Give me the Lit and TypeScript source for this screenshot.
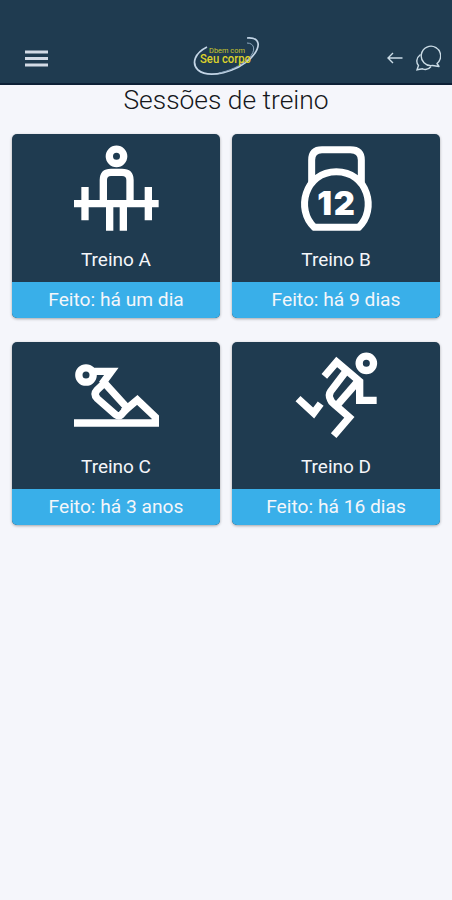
import { LitElement, html, svg, css } from "lit";
import { customElement, property } from "lit/decorators.js";

const icons: Record<string, unknown> = {
  barbell: svg`
    <circle cx="151.5" cy="55" r="21.5" stroke-width="22"/>
    <path d="M112 192V126Q112 103 135 103H168Q192 103 192 126V192"/>
    <path d="M24 197H278M57 147V247M247 147V247M131 205V278M172 205V278"/>`,
  kettlebell: svg`
    <path d="M77 134V66Q77 35 108 35H193Q226 35 226 66V134" stroke-width="21"/>
    <path d="M85 268C28 216 56 101 151 101S274 216 218 268Z" stroke-width="21"/>
    <text x="94" y="230" class="num">1</text>
    <text x="143" y="230" class="num">2</text>`,
  situp: svg`
    <circle cx="60" cy="87" r="21.5" stroke-width="22"/>
    <path d="M78 76H136L108 114"/>
    <path d="M113 108L184 186L166 206Q158 213 149 206L94 158Q81 145 93 132L117 109"/>
    <path d="M172 197L214 162L268 213V231H24"/>`,
  runner: svg`
    <circle cx="241" cy="52" r="21.5" stroke-width="22"/>
    <path d="M115 91L152 48L221 106V163H272"/>
    <path d="M180 76L134 136Q126 147 134 162Q136 168 143 173L190 214L143 269"/>
    <path d="M214 108L155 176"/>
    <path d="M36 158L83 201L104 173"/>`,
};

@customElement("workout-card")
class WorkoutCard extends LitElement {
  @property() name = "";
  @property() done = "";
  @property() icon = "";
  static styles = css`
    :host {
      display: flex;
      flex-direction: column;
      height: 183.6px;
      border-radius: 5px;
      overflow: hidden;
      background: #1f3b50;
      color: #f4f6fa;
      text-align: center;
      box-shadow: 0 1px 3px #0005;
    }
    .top { flex: 1; padding-top: 4px; display: flex; flex-direction: column; align-items: center; }
    .icon { width: 104px; height: 100px; fill: none; stroke: #fff; stroke-width: 22; }
    .num { font: 900 98px Inter, sans-serif; fill: #fff; stroke: none; }
    .name { font-size: 19px; line-height: 24px; margin-top: 9.4px; }
    .done { height: 36px; line-height: 36px; font-size: 19.2px; background: #39afe9; }
  `;
  render() {
    return html`
      <div class="top">
        <svg class="icon" viewBox="-6 0 312 300">${icons[this.icon]}</svg>
        <div class="name">${this.name}</div>
      </div>
      <div class="done">Feito: ${this.done}</div>`;
  }
}

@customElement("app-root")
class AppRoot extends LitElement {
  static styles = css`
    :host {
      display: block;
      height: 900px;
      background: #f5f6fb;
      font-family: Roboto, sans-serif;
    }
    header {
      box-sizing: border-box;
      height: 85px;
      padding: 33px 11px 0 25px;
      display: grid;
      grid-template-columns: 1fr 70px 1fr;
      align-items: center;
      background: #1f3b50;
      border-bottom: 2px solid #0d2036;
    }
    .menu { width: 23px; height: 17px; }
    .logo { width: 90px; height: 50px; justify-self: center; margin-left: -14px; }
    .small { font: 8px Roboto, sans-serif; fill: #c9c62e; }
    .big { font: 500 12px Roboto, sans-serif; fill: #ddd32b; }
    .actions { justify-self: end; display: flex; align-items: center; gap: 12px; }
    .line { fill: none; stroke: #cbdce6; stroke-width: 1.4; }
    h1 {
      margin: 0;
      height: 49.4px;
      font-size: 26.4px;
      line-height: 30px;
      font-weight: 300;
      text-align: center;
      color: #15181c;
    }
    main { display: grid; grid-template-columns: 1fr 1fr; gap: 23.6px 12px; padding: 0 12px; }
  `;
  render() {
    return html`
      <header>
        <svg class="menu" viewBox="0 0 23 17"><path d="M0 2H23M0 8.5H23M0 15H23" stroke="#d3dbe6" stroke-width="2.8"/></svg>
        <svg class="logo" viewBox="0 0 90 50">
          <path d="M26 14C14 20 10 30 17 37C28 46 56 39 70 25C81 13 79 4 66 5" fill="none" stroke="#c3d5e6" stroke-width="1.7"/>
          <path d="M66 10C74 10 75 18 68 25C60 33 48 38 38 40" fill="none" stroke="#8faac2" stroke-width="1"/>
          <text class="small" x="28" y="19.5" textLength="36" lengthAdjust="spacingAndGlyphs">Dbem com</text>
          <text class="big" x="19" y="30" textLength="51" lengthAdjust="spacingAndGlyphs">Seu corpo</text>
        </svg>
        <div class="actions">
          <svg class="line" width="16" height="12" viewBox="0 0 16 12"><path d="M6 1L1 6L6 11M1 6H15.5"/></svg>
          <svg class="line" width="26" height="26" viewBox="0 0 26 26">
            <path d="M22 18.5A9.7 9.7 0 1 0 17.5 20.5L24 21.5Z" stroke-linejoin="round"/>
            <path d="M5.5 9.5C1 13 1 18 3.5 20.5L2 24.8L7.5 23.8C11 25.3 14 24 16 21.5"/>
          </svg>
        </div>
      </header>
      <h1>Sessões de treino</h1>
      <main>
        <workout-card name="Treino A" done="há um dia" icon="barbell"></workout-card>
        <workout-card name="Treino B" done="há 9 dias" icon="kettlebell"></workout-card>
        <workout-card name="Treino C" done="há 3 anos" icon="situp"></workout-card>
        <workout-card name="Treino D" done="há 16 dias" icon="runner"></workout-card>
      </main>`;
  }
}
